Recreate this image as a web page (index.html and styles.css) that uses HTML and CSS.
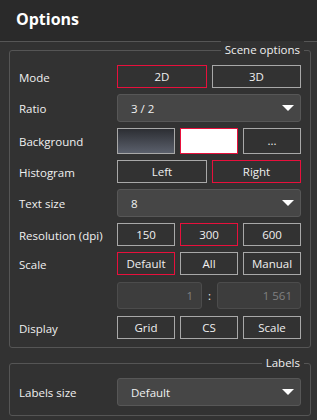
FILE: index.html
```html
<!DOCTYPE html>
<html>
<head>
<meta charset="utf-8">
<link rel="stylesheet" href="styles.css">
</head>
<body>
<div class="header"><h1 class="title">Options</h1></div>
<div class="content">
  <section class="group scene">
    <span class="legend">Scene options</span>
    <div class="form">
      <span class="label">Mode</span>
      <div class="btns two"><button class="btn sel">2D</button><button class="btn">3D</button></div>

      <span class="label">Ratio</span>
      <div class="select"><span>3 / 2</span><span class="arrow"></span></div>

      <span class="label">Background</span>
      <div class="btns three"><button class="btn swatch grad"></button><button class="btn swatch white sel"></button><button class="btn swatch">...</button></div>

      <span class="label">Histogram</span>
      <div class="btns two"><button class="btn">Left</button><button class="btn sel">Right</button></div>

      <span class="label">Text size</span>
      <div class="select"><span>8</span><span class="arrow"></span></div>

      <span class="label">Resolution (dpi)</span>
      <div class="btns three"><button class="btn">150</button><button class="btn sel">300</button><button class="btn">600</button></div>

      <span class="label">Scale</span>
      <div class="btns three"><button class="btn sel">Default</button><button class="btn">All</button><button class="btn">Manual</button></div>

      <span class="label"></span>
      <div class="inputs"><div class="input">1</div><span class="colon">:</span><div class="input">1 561</div></div>

      <span class="label">Display</span>
      <div class="btns three"><button class="btn">Grid</button><button class="btn">CS</button><button class="btn">Scale</button></div>
    </div>
  </section>

  <section class="group labels">
    <span class="legend">Labels</span>
    <div class="form">
      <span class="label">Labels size</span>
      <div class="select"><span>Default</span><span class="arrow"></span></div>
    </div>
  </section>
</div>
</body>
</html>
```

FILE: styles.css
```css
* { box-sizing: border-box; }
html, body { margin: 0; padding: 0; }
body {
  background: #323232;
  color: #f0f0f0;
  font-family: "Open Sans", "Noto Sans", sans-serif;
  font-size: 11.5px;
  width: 317px;
  height: 420px;
  overflow: hidden;
}
.header {
  height: 42px;
  background: #2a2a2a;
  border-bottom: 1px solid #565656;
  padding: 8px 0 0 16px;
}
.title {
  margin: 0;
  font-size: 16px;
  font-weight: 700;
  line-height: 22px;
  color: #ffffff;
}
.content {
  padding: 8px 6px 0 9px;
}
.group {
  position: relative;
  border: 1px solid #555;
  border-radius: 3px;
  padding: 14px 9px 8px 9px;
}
.group.labels {
  margin-top: 15px;
  padding-bottom: 9px;
}
.legend {
  position: absolute;
  top: -10px;
  right: 6px;
  padding: 0 4px;
  background: #323232;
  line-height: 18px;
}
.form {
  display: grid;
  grid-template-columns: 98px 184px;
  row-gap: 6px;
  align-items: center;
}
.label { white-space: nowrap; padding-top: 1px; }
.btns {
  display: grid;
  column-gap: 5px;
}
.btns.two { grid-template-columns: 90px 89px; }
.btns.three { grid-template-columns: 58px 58px 58px; }
.btn {
  height: 23px;
  background: transparent;
  border: 1px solid #a8a8a8;
  color: #f0f0f0;
  font: inherit;
  padding: 0;
  line-height: 20px;
  text-align: center;
}
.btn.sel { border-color: #e8103c; }
.swatch { height: 26px; }
.swatch.grad { background: linear-gradient(#2c2e33, #5b606c); }
.swatch.white { background: #ffffff; }
.select {
  height: 28px;
  background: #464646;
  border: 1px solid #575757;
  border-radius: 3px;
  display: flex;
  align-items: center;
  justify-content: space-between;
  padding: 0 6px 0 13px;
}
.arrow {
  width: 0;
  height: 0;
  border-left: 6px solid transparent;
  border-right: 6px solid transparent;
  border-top: 6px solid #ffffff;
}
.inputs {
  display: grid;
  grid-template-columns: 85px 15px 84px;
  align-items: center;
  margin: 1px 0;
}
.input {
  height: 27px;
  background: #3d3d3d;
  border: 1px solid #4c4c4c;
  border-radius: 3px;
  color: #808080;
  text-align: right;
  padding-right: 8px;
  line-height: 25px;
}
.colon { text-align: center; }
```
